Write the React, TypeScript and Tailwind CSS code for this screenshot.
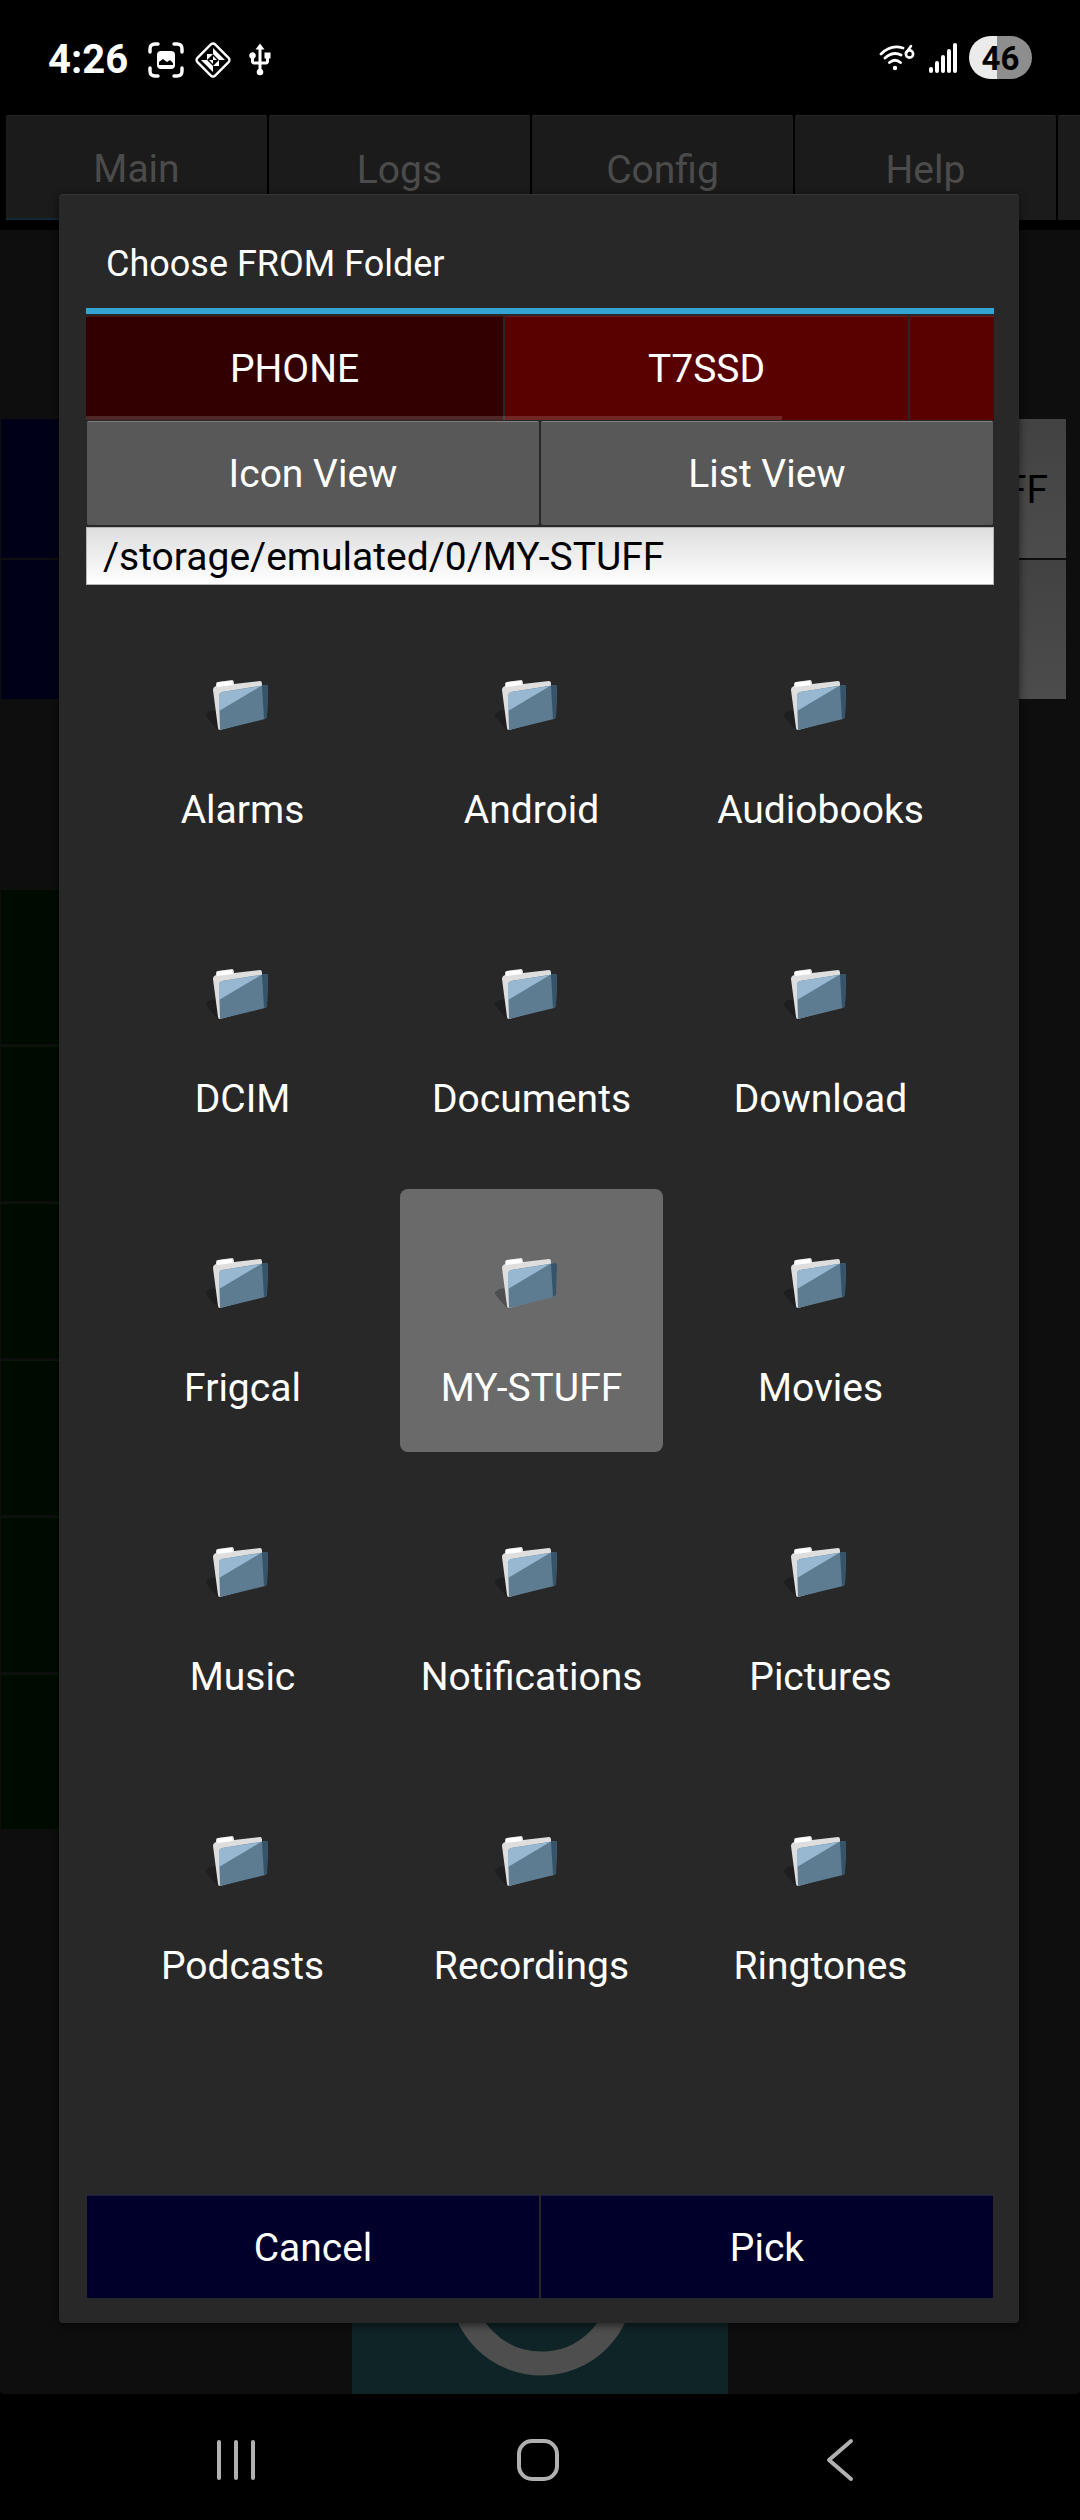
import { MdUsb } from "react-icons/md";
import { clsx } from "clsx";

const pageTabs = ["Main", "Logs", "Config", "Help", ""];

const folders = [
  "Alarms",
  "Android",
  "Audiobooks",
  "DCIM",
  "Documents",
  "Download",
  "Frigcal",
  "MY-STUFF",
  "Movies",
  "Music",
  "Notifications",
  "Pictures",
  "Podcasts",
  "Recordings",
  "Ringtones",
];

const currentPath = "/storage/emulated/0/MY-STUFF";

function FolderIcon() {
  return (
    <svg viewBox="0 0 64 52" className="mr-3 h-[52px] w-16" aria-hidden="true">
      <path d="M1 34 L5 31 L12 30 L15 51 Q9 47 1 36 Z" fill="#000" opacity=".25" />
      <path
        d="M11 4 Q11 2 13 2 L27 0 Q29 0 29 4 L55 1 Q57 1 57 4 L58 38 L15 50 Q13 50 13 48 L8 10 Q8 7 11 6 Z"
        fill="#dedede"
      />
      <path d="M12 4 Q12 2 14 2 L27 1 L28 5 L12 7 Z" fill="#fff" />
      <path
        d="M17 12 L61 5 Q63 5 63 7 L62 36 Q62 38 60 39 L15 50 L14 16 Q14 13 17 12 Z"
        fill="#5d7c91"
      />
      <path d="M17 12 L56 6 L14 31 L14 16 Q14 13 17 12 Z" fill="#98b8d2" />
      <path d="M57 6 L61 5 Q63 5 63 7 L62 36 Q62 38 59 39 Z" fill="#355469" />
    </svg>
  );
}

function StatusBar() {
  return (
    <header className="flex h-[115px] items-center justify-between pr-12 pl-12 text-white">
      <div className="flex items-center pt-1">
        <span className="text-[40px] leading-10 font-bold">4:26</span>
        <svg
          viewBox="0 0 36 36"
          className="ml-5 size-9"
          fill="none"
          stroke="currentColor"
          strokeWidth="3.4"
          strokeLinecap="round"
          aria-hidden="true"
        >
          <path d="M2 10V7Q2 2 7 2h3M26 2h3Q34 2 34 7v3M34 26v3Q34 34 29 34h-3M10 34H7Q2 34 2 29v-3" />
          <rect x="9" y="9" width="18" height="18" rx="4" fill="currentColor" stroke="none" />
          <path d="M11 23v-3l4-3 4 3 3-2 3 3v2z" fill="#000" stroke="none" />
        </svg>
        <svg viewBox="0 0 38 38" className="ml-2.5 size-[38px]" aria-hidden="true">
          <rect
            x="6.5"
            y="6.5"
            width="25"
            height="25"
            rx="3"
            transform="rotate(45 19 19)"
            fill="none"
            stroke="currentColor"
            strokeWidth="2.4"
          />
          <path
            d="M19 7v6h6zM31 19h-6v-6zM19 31v-6h-6zM7 19h6v6zM13 13h6l-6 6zM25 13v6l-6-6zM25 25h-6l6-6zM13 25v-6l6 6z"
            fill="currentColor"
          />
          <path d="M19 15v4h4zM19 23v-4h-4z" fill="currentColor" />
        </svg>
        <MdUsb className="ml-2.5 size-9" />
      </div>
      <div className="flex items-center">
        <svg
          viewBox="0 0 36 28"
          className="h-7 w-9"
          fill="none"
          stroke="currentColor"
          strokeWidth="2.8"
          strokeLinecap="round"
          aria-hidden="true"
        >
          <path d="M2 10Q12 0 24 4M6 14Q14 7 22 11M10.5 18.5Q16 14 21.5 18.5" />
          <circle cx="16" cy="24" r="2.2" fill="currentColor" stroke="none" />
          <path d="M32 2l-5 7" strokeWidth="2.6" />
          <circle cx="30.500" cy="10" r="3.600" strokeWidth="2.600" />
        </svg>
        <svg
          viewBox="0 0 28 30"
          className="ml-3.5 h-[30px] w-7"
          stroke="currentColor"
          strokeWidth="4"
          strokeLinecap="round"
          aria-hidden="true"
        >
          <path d="M2 26v2M8 20v8M14 14v14M20 8v20M26 2v26" />
        </svg>
        <span className="ml-3 flex h-[43px] w-[63px] items-center justify-center rounded-full bg-linear-to-r from-[#ebebeb] from-45% to-[#8e8e8e] to-45% pt-0.5 text-[33px] leading-8 font-bold text-black">
          46
        </span>
      </div>
    </header>
  );
}

// Main screen that stays dimmed behind the dialog
function DimmedPage() {
  return (
    <div className="col-start-1 row-start-1 flex flex-col overflow-hidden">
      <nav className="flex gap-0.5 overflow-hidden pl-1.5">
        {pageTabs.map((tab, i) => (
          <button
            key={tab}
            className={clsx(
              "h-[105px] w-[261px] shrink-0 rounded-t-xs border-t border-t-[#262626] bg-[#1b1b1b] pt-1 text-[39px] text-[#4b4b4b]",
              i === 0 && "border-b-2 border-b-[#0d2a35]",
            )}
          >
            {tab}
          </button>
        ))}
      </nav>
      <div className="mt-2.5 flex flex-1 flex-col rounded-b-sm bg-[#0e0e0e] pt-[189px]">
        <div className="grid grid-cols-[1fr_2fr] gap-0.5 pr-3.5 pl-px">
          <button aria-label="From" className="bg-[#000018]" />
          <input
            aria-label="From folder"
            readOnly
            value={currentPath}
            className="h-[139px] bg-linear-to-b from-[#424242] to-[#4c4c4c] pt-0.5 pr-[18px] text-right text-[39px] text-black"
          />
          <button aria-label="To" className="bg-[#000018]" />
          <input
            aria-label="To folder"
            readOnly
            className="h-[139px] bg-linear-to-b from-[#424242] to-[#4c4c4c]"
          />
        </div>
        <div className="mt-[190px] flex flex-col gap-0.5 pl-px">
          {["Copy", "Sync", "Verify", "Backup", "Restore", "Clean"].map((action) => (
            <button key={action} aria-label={action} className="h-[155px] w-2/5 border-t border-[#0a160a] bg-[#000b00]" />
          ))}
        </div>
        <div className="mx-auto mt-auto flex w-[376px] justify-center bg-[#0f2426] pb-[18px]">
          <svg viewBox="0 0 186 186" className="size-[186px]" aria-hidden="true">
            <circle cx="94.5" cy="93" r="80.5" fill="none" stroke="#4e4e4e" strokeWidth="24" />
          </svg>
        </div>
      </div>
    </div>
  );
}

function ChooserDialog() {
  return (
    <div
      role="dialog"
      aria-labelledby="chooser-title"
      className="z-10 col-start-1 row-start-1 mt-[79px] mr-[61px] mb-[71px] ml-[59px] flex flex-col rounded-sm border-t border-[#363636] bg-[#282828] pr-[25px] pb-[25px] pl-[27px] shadow-[0_2px_8px_rgba(0,0,0,0.6)]"
    >
      <h1 id="chooser-title" className="flex h-[113px] items-center pt-6 pl-5 text-[36px] text-white">
        Choose FROM Folder
      </h1>
      <div className="h-1.5 bg-[#34a5d2]" />

      {/* Storage volumes */}
      <div className="relative mt-0.5 flex h-[104px] gap-0.5 overflow-hidden text-[39px] text-white">
        <button className="w-[417px] shrink-0 border-t border-[#4a1414] bg-[#320000] pt-0.5">PHONE</button>
        <button className="w-[403px] shrink-0 border-t border-[#6e1a1a] bg-[#590000] pt-0.5">T7SSD</button>
        <button aria-label="More storage" className="flex-1 border-t border-[#6e1a1a] bg-[#590000]" />
        <div className="absolute bottom-0 left-0 h-1 w-[696px] bg-white/15" />
      </div>

      <div className="mt-px grid grid-cols-2 gap-0.5 px-px text-[39px] text-white">
        <button className="h-[104px] rounded-xs border-t border-[#808080] bg-[#585858] pt-0.5">Icon View</button>
        <button className="h-[104px] rounded-xs border-t border-[#808080] bg-[#585858] pt-0.5">List View</button>
      </div>
      <input
        aria-label="Folder path"
        defaultValue={currentPath}
        className="mt-0.5 h-[58px] w-full border border-[#b5b5b5] bg-linear-to-b from-[#dedede] to-white px-4 pt-0.5 text-[39px] text-black"
      />

      <div className="grid grid-cols-3 gap-[26px] pt-[26px] pr-[42px] pb-[165px] pl-[25px]">
        {folders.map((name) => (
          <button
            key={name}
            className={clsx(
              "flex h-[263px] flex-col items-center rounded-lg pt-[69px] text-[39px] leading-[48px] text-white",
              name === "MY-STUFF" && "bg-[#6a6a6a]",
            )}
          >
            <FolderIcon />
            <span className="mt-[54px]">{name}</span>
          </button>
        ))}
      </div>

      <div className="mt-auto grid grid-cols-2 gap-0.5 px-px text-[39px] text-white">
        <button className="h-[103px] border-t border-[#1c1c44] bg-[#00002a] pt-0.5">Cancel</button>
        <button className="h-[103px] border-t border-[#1c1c44] bg-[#00002a] pt-0.5">Pick</button>
      </div>
    </div>
  );
}

function NavBar() {
  return (
    <footer className="flex h-[126px] items-center justify-center gap-[258px] pt-1.5 pr-1 text-[#b0b0b0]">
      <button aria-label="Recent apps">
        <svg viewBox="0 0 44 44" className="size-11" stroke="currentColor" strokeWidth="4" strokeLinecap="round">
          <path d="M5 4v36M22 4v36M39 4v36" />
        </svg>
      </button>
      <button aria-label="Home">
        <svg viewBox="0 0 44 44" className="size-11" fill="none" stroke="currentColor" strokeWidth="4">
          <rect x="3" y="3" width="38" height="38" rx="13" />
        </svg>
      </button>
      <button aria-label="Back">
        <svg
          viewBox="0 0 44 44"
          className="size-11"
          fill="none"
          stroke="currentColor"
          strokeWidth="4"
          strokeLinecap="round"
          strokeLinejoin="round"
        >
          <path d="M33 3L11 22l22 19" />
        </svg>
      </button>
    </footer>
  );
}

function App() {
  return (
    <div className="flex min-h-screen flex-col bg-black font-[Roboto,sans-serif]">
      <StatusBar />
      <main className="grid flex-1">
        <DimmedPage />
        <ChooserDialog />
      </main>
      <NavBar />
    </div>
  );
}

export default App;
